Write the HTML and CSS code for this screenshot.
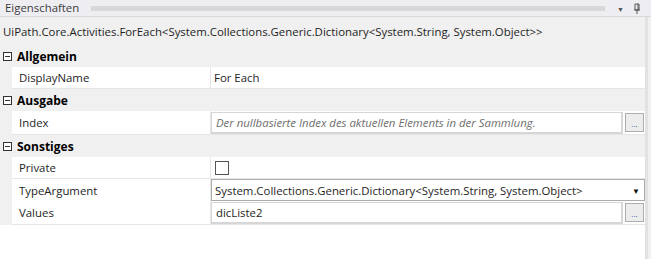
FILE: index.html
```html
<!DOCTYPE html>
<html lang="de">
<head>
    <meta charset="UTF-8">
    <title>Eigenschaften</title>
    <link rel="stylesheet" href="styles.css">
</head>
<body>
    <div class="panel">
        <div class="titlebar">
            <span class="title">Eigenschaften</span>
            <span class="grip"></span>
            <span class="tb-arrow">&#9660;</span>
            <svg class="pin" width="8" height="11" viewBox="0 0 8 11">
                <path d="M2 1h4v6H2z M1 7h6 M4 7v4" fill="none" stroke="#555" stroke-width="1"/>
                <path d="M5 1v6" stroke="#555" stroke-width="1"/>
            </svg>
        </div>

        <div class="content">
            <div class="typename">UiPath.Core.Activities.ForEach&lt;System.Collections.Generic.Dictionary&lt;System.String, System.Object&gt;&gt;</div>

            <div class="grid">
                <div class="category">
                    <span class="toggle"></span>
                    <span>Allgemein</span>
                </div>
                <div class="prop">
                    <div class="prop-name">DisplayName</div>
                    <div class="prop-value"><span class="plain">For Each</span></div>
                </div>

                <div class="category">
                    <span class="toggle"></span>
                    <span>Ausgabe</span>
                </div>
                <div class="prop prop-tall">
                    <div class="prop-name">Index</div>
                    <div class="prop-value">
                        <div class="textbox placeholder">Der nullbasierte Index des aktuellen Elements in der Sammlung.</div>
                        <div class="dots-btn">...</div>
                    </div>
                </div>

                <div class="category">
                    <span class="toggle"></span>
                    <span>Sonstiges</span>
                </div>
                <div class="prop">
                    <div class="prop-name">Private</div>
                    <div class="prop-value"><span class="checkbox"></span></div>
                </div>
                <div class="prop">
                    <div class="prop-name">TypeArgument</div>
                    <div class="prop-value">
                        <div class="combo">
                            <span>System.Collections.Generic.Dictionary&lt;System.String, System.Object&gt;</span>
                            <span class="combo-arrow">&#9660;</span>
                        </div>
                    </div>
                </div>
                <div class="prop prop-tall">
                    <div class="prop-name">Values</div>
                    <div class="prop-value">
                        <div class="textbox">dicListe2</div>
                        <div class="dots-btn">...</div>
                    </div>
                </div>
            </div>

            <div class="filler"></div>
        </div>
    </div>
</body>
</html>
```

FILE: styles.css
```css
:root {
    --color-bg: #f0f0f0;
    --color-text: #1e1e1e;
    --color-line: #e6e6e6;
    --color-box: #d6d6d6;
}

body {
    margin: 0;
    font-family: 'Open Sans', 'Noto Sans', sans-serif;
    font-size: 11.4px;
    color: var(--color-text);
    background: #fff;
}

.panel {
    width: 651px;
    height: 259px;
    display: flex;
    flex-direction: column;
    background: var(--color-bg);
}

.titlebar {
    height: 16px;
    display: flex;
    align-items: center;
    background: #eeeef2;
    border-bottom: 1px solid #d9d9d9;
    padding: 0 10px 0 5px;
    gap: 6px;
}

.title {
    color: #3c3c3c;
    line-height: 16px;
}

.grip {
    flex: 1;
    height: 5px;
    margin: 0 6px;
    background-image: radial-gradient(circle, #b4b4b4 0.5px, transparent 0.9px);
    background-size: 2px 2px;
    opacity: 0.8;
}

.tb-arrow {
    font-size: 7px;
    color: #555;
    margin-top: 3px;
}

.pin {
    margin-left: 3px;
}

.content {
    flex: 1;
    border-right: 3px solid #e2e2e2;
    margin-right: 3px;
    display: flex;
    flex-direction: column;
}

.typename {
    height: 28px;
    line-height: 29px;
    padding-left: 3px;
    white-space: nowrap;
}

.grid {
    display: flex;
    flex-direction: column;
}

.category {
    height: 22px;
    display: flex;
    align-items: center;
    gap: 5px;
    padding-left: 3px;
    padding-top: 1px;
    box-sizing: border-box;
    font-weight: 700;
    font-size: 12px;
    color: #000;
}

.toggle {
    width: 7px;
    height: 7px;
    border: 1px solid #333;
    position: relative;
    background: #fff;
}

.toggle::after {
    content: '';
    position: absolute;
    left: 1px;
    right: 1px;
    top: 3px;
    height: 1px;
    background: #333;
}

.prop {
    height: 21px;
    margin-left: 12px;
    display: grid;
    grid-template-columns: 198px 1fr;
    gap: 1px;
    border-bottom: 1px solid var(--color-line);
    background: var(--color-line);
}

.prop-tall {
    height: 23px;
}

.prop-name,
.prop-value {
    background: #fff;
    display: flex;
    align-items: center;
}

.prop-name {
    padding-left: 7px;
}

.prop-value {
    gap: 2px;
}

.plain {
    padding-left: 3px;
}

.textbox {
    flex: 1;
    height: 19px;
    line-height: 19px;
    border: 2px solid var(--color-box);
    border-top-width: 1px;
    border-left-width: 1px;
    padding-left: 4px;
    white-space: nowrap;
    overflow: hidden;
}

.placeholder {
    font-style: italic;
    color: #6d6d6d;
}

.dots-btn {
    width: 17px;
    height: 17px;
    border: 1px solid #adadad;
    background: #ececec;
    font-size: 8px;
    line-height: 20px;
    text-align: center;
    color: #3b5aa0;
    margin-right: 1px;
}

.checkbox {
    width: 12px;
    height: 12px;
    border: 1px solid #555;
    margin-left: 4px;
    background: #fff;
}

.combo {
    flex: 1;
    height: 20px;
    border: 1px solid #acacac;
    display: flex;
    align-items: center;
    justify-content: space-between;
    padding: 0 4px 0 3px;
    white-space: nowrap;
}

.combo-arrow {
    font-size: 8px;
    color: #111;
}

.filler {
    flex: 1;
    background: #fff;
}
```
